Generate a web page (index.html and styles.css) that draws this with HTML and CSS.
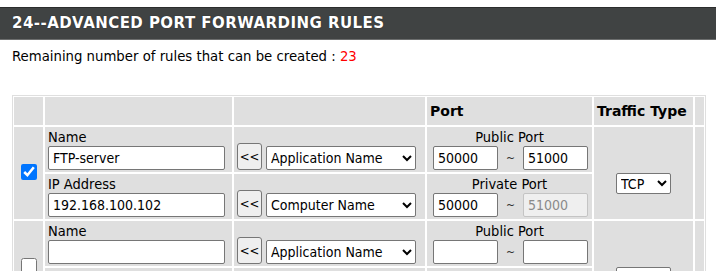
FILE: index.html
```html
<!DOCTYPE html>
<html>
<head>
<meta charset="utf-8">
<link rel="stylesheet" href="styles.css">
</head>
<body>
<div class="title">24--ADVANCED PORT FORWARDING RULES</div>
<div class="content">
  <p class="remaining">Remaining number of rules that can be created : <span class="red">23</span></p>
  <table class="rules">
    <colgroup>
      <col class="c-check"><col class="c-name"><col class="c-pick"><col class="c-port"><col class="c-type"><col class="c-end">
    </colgroup>
    <tr class="head">
      <td></td><td></td><td></td><td class="th">Port</td><td class="th">Traffic Type</td><td></td>
    </tr>
    <tr class="sub">
      <td rowspan="2" class="check"><input type="checkbox" checked></td>
      <td class="field"><div class="lbl">Name</div><input class="txt wide" type="text" value="FTP-server"></td>
      <td class="pick"><button class="arrow">&lt;&lt;</button><select class="sel"><option>Application Name</option></select></td>
      <td class="port"><div class="lbl">Public Port</div><input class="txt num" type="text" value="50000"><span class="tilde">~</span><input class="txt num" type="text" value="51000"></td>
      <td rowspan="2" class="type"><select class="proto"><option>TCP</option></select></td>
      <td rowspan="2"></td>
    </tr>
    <tr class="sub">
      <td class="field"><div class="lbl">IP Address</div><input class="txt wide" type="text" value="192.168.100.102"></td>
      <td class="pick"><button class="arrow">&lt;&lt;</button><select class="sel"><option>Computer Name</option></select></td>
      <td class="port"><div class="lbl">Private Port</div><input class="txt num" type="text" value="50000"><span class="tilde">~</span><input class="txt num" type="text" value="51000" disabled></td>
    </tr>
    <tr class="sub">
      <td rowspan="2" class="check"><input type="checkbox"></td>
      <td class="field"><div class="lbl">Name</div><input class="txt wide" type="text" value=""></td>
      <td class="pick"><button class="arrow">&lt;&lt;</button><select class="sel"><option>Application Name</option></select></td>
      <td class="port"><div class="lbl">Public Port</div><input class="txt num" type="text" value=""><span class="tilde">~</span><input class="txt num" type="text" value=""></td>
      <td rowspan="2" class="type"><select class="proto"><option>TCP</option></select></td>
      <td rowspan="2"></td>
    </tr>
    <tr class="sub">
      <td class="field"><div class="lbl">IP Address</div><input class="txt wide" type="text" value=""></td>
      <td class="pick"><button class="arrow">&lt;&lt;</button><select class="sel"><option>Computer Name</option></select></td>
      <td class="port"><div class="lbl">Private Port</div><input class="txt num" type="text" value=""><span class="tilde">~</span><input class="txt num" type="text" value="" disabled></td>
    </tr>
  </table>
</div>
</body>
</html>
```
FILE: styles.css
```css
* { box-sizing: border-box; }
html, body { margin: 0; padding: 0; background: #fff; }
body {
  font-family: "DejaVu Sans Condensed", "DejaVu Sans", sans-serif;
  font-size: 14px;
  color: #000;
  padding-top: 7px;
}
.title {
  height: 33px;
  background: #404343;
  border-top: 1px solid #2b2d2d;
  border-bottom: 1px solid #6c6e6e;
  color: #fff;
  font-family: "DejaVu Sans", sans-serif;
  font-weight: bold;
  font-size: 15px;
  letter-spacing: 0.45px;
  line-height: 31px;
  padding-left: 12px;
  white-space: nowrap;
  text-shadow: 0 0 1px #1a1a1a;
}
.content { padding-left: 12px; }
.remaining {
  margin: 0;
  padding-top: 7px;
  line-height: 18px;
  height: 55px;
  font-size: 14.75px;
}
.red { color: #ff0000; }
.rules {
  width: 694px;
  table-layout: fixed;
  border-collapse: separate;
  border-spacing: 0;
  background: #dfdfdf;
  padding: 1px;
}
.c-check { width: 31px; }
.c-name { width: 189px; }
.c-pick { width: 193px; }
.c-port { width: 167px; }
.c-type { width: 101px; }
.c-end { width: 11px; }
.rules td {
  border: 1px solid #fff;
  padding: 0;
  background: #dfdfdf;
}
.head td { height: 30px; }
.th {
  font-family: "DejaVu Sans", sans-serif;
  font-weight: bold;
  font-size: 14px;
  padding-left: 3px !important;
  vertical-align: middle;
}
.sub td { height: 47px; }
.check { text-align: center; vertical-align: middle; }
.check input { width: 16px; height: 16px; margin: 0; }
.field { vertical-align: top; padding: 2px 3px 0 !important; }
.lbl { line-height: 17px; height: 17px; font-size: 14.5px; }
.txt {
  font-family: "DejaVu Sans Condensed", "DejaVu Sans", sans-serif;
  font-size: 14px;
  height: 24px;
  border: 1px solid #767676;
  border-radius: 2px;
  padding: 0 4px;
  margin: 0;
  background: #fff;
  color: #000;
  vertical-align: middle;
}
.txt:disabled { background: #efefef; color: #8a8a8a; border-color: #c4c4c4; }
.wide { width: 177px; }
.pick { vertical-align: bottom; padding: 0 0 2px 3px !important; }
.arrow {
  font-family: "DejaVu Sans Condensed", "DejaVu Sans", sans-serif;
  font-size: 13px;
  width: 25px;
  height: 27px;
  padding: 0;
  margin: 0 4px 0 0;
  background: #efefef;
  border: 1px solid #767676;
  border-radius: 3px;
  color: #000;
  vertical-align: bottom;
}
.sel {
  font-family: "DejaVu Sans Condensed", "DejaVu Sans", sans-serif;
  font-size: 14px;
  width: 150px;
  height: 24px;
  margin: 0;
  border: 1px solid #767676;
  border-radius: 2px;
  background: #fff;
  color: #000;
  vertical-align: bottom;
}
.port { vertical-align: top; padding: 2px 0 0 6px !important; text-align: left; }
.port .lbl { text-align: center; padding-right: 6px; }
.num { width: 65px; }
.tilde { display: inline-block; width: 25px; text-align: center; font-size: 12px; color: #333; vertical-align: middle; }
.type { text-align: center; vertical-align: top; padding-top: 46px !important; }
.proto {
  font-family: "DejaVu Sans Condensed", "DejaVu Sans", sans-serif;
  font-size: 14px;
  width: 55px;
  height: 21px;
  margin: 0;
  border: 1px solid #767676;
  border-radius: 2px;
  background: #fff;
  color: #000;
}
```
